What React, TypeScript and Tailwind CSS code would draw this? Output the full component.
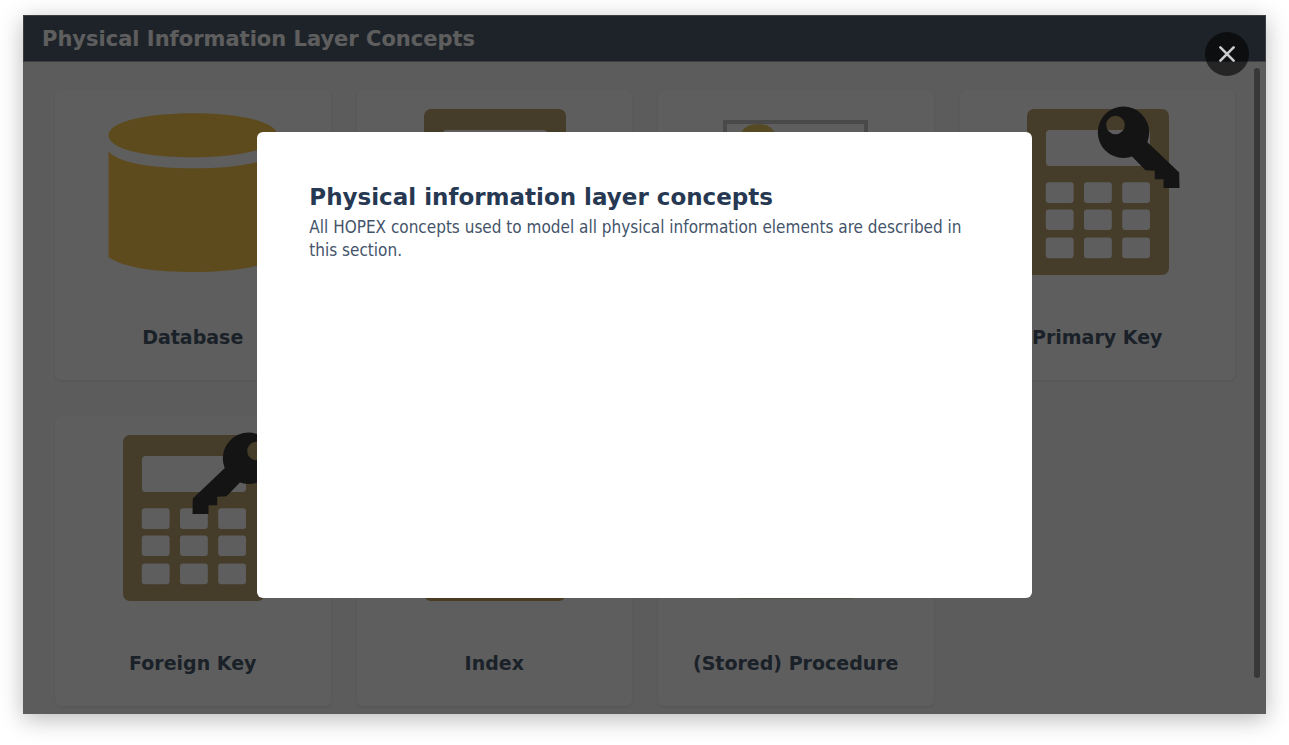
import type { ReactNode } from "react";

const KEY_SHAFT =
  "M141.5 37.3 L172.2 66.5 L172.5 82 L156.5 82 L156.5 73.3 L147.8 73.3 L147.8 64.7 L138.5 64.3 L125.8 51.3 L118 42 L133 30 Z";
const KEY_HEAD =
  "M116.5 0.6 a25.7 25.7 0 1 0 0 51.4 a25.7 25.7 0 1 0 0 -51.4 Z M108.5 9.7 a9.3 9.3 0 1 1 0 18.6 a9.3 9.3 0 1 1 0 -18.6 Z";

function Icon({ children }: { children: ReactNode }) {
  return (
    <svg viewBox="0 0 180 180" className="h-[180px] w-[180px] overflow-visible" aria-hidden="true">
      {children}
    </svg>
  );
}

function Calculator({ fill = "#baa271" }: { fill?: string }) {
  return (
    <>
      <rect x="20" y="3" width="142" height="166" rx="7" fill={fill} />
      <rect x="39" y="24" width="104" height="36" rx="3.5" fill="#fff" />
      {[76.3, 103.4, 131.6].map((y) =>
        [38.8, 77, 115.2].map((x) => (
          <rect key={`${x}-${y}`} x={x} y={y} width="27.8" height="20.6" rx="3" fill="#fff" />
        )),
      )}
    </>
  );
}

function Key({ mirrored = false }: { mirrored?: boolean }) {
  return (
    <g fill="#363636" transform={mirrored ? "translate(262 0) scale(-1 1)" : undefined}>
      <path d={KEY_HEAD} fillRule="evenodd" />
      <path d={KEY_SHAFT} />
    </g>
  );
}

const concepts: { name: string; icon: ReactNode }[] = [
  {
    name: "Database",
    icon: (
      <g fill="#fdca50">
        <path d="M5.5 29.3 C5.5 16 42 7.3 90 7.3 S174.5 16 174.5 29.3 S138 51.3 90 51.3 S5.5 43 5.5 29.3 Z" />
        <path d="M5.5 45 C14 57 50 62.3 90 62.3 S166 57 174.5 45 V151 C160 162 125 166 90 166 S20 162 5.5 151 Z" />
      </g>
    ),
  },
  { name: "Table", icon: <Calculator /> },
  {
    name: "View",
    icon: (
      <>
        <rect x="19" y="16" width="141" height="130" fill="none" stroke="#c6c6c6" strokeWidth="4" />
        <ellipse cx="52" cy="29" rx="17" ry="11" fill="#e6c860" />
      </>
    ),
  },
  {
    name: "Primary Key",
    icon: (
      <>
        <Calculator />
        <Key />
      </>
    ),
  },
  {
    name: "Foreign Key",
    icon: (
      <>
        <Calculator />
        <Key mirrored />
      </>
    ),
  },
  { name: "Index", icon: <Calculator fill="#c6a45c" /> },
  {
    name: "(Stored) Procedure",
    icon: <rect x="30" y="20" width="120" height="146.5" rx="4" fill="#c8bd86" />,
  },
];

export default function App() {
  return (
    <div className="bg-white px-[23px] pt-[15px] pb-[31px] font-['DejaVu_Sans',sans-serif]">
      <div className="relative bg-[#f8f8f8] pb-2 shadow-[0_5px_22px_rgba(0,0,0,0.28)]">
        <header className="flex h-[47px] items-center border border-[#a4a8ac] bg-[#536172] px-[18px]">
          <h1 className="text-[21px] leading-7 font-bold text-white">Physical Information Layer Concepts</h1>
        </header>

        <main className="grid grid-cols-4 gap-x-[26px] gap-y-9 pt-7 pr-[31px] pl-8">
          {concepts.map(({ name, icon }) => (
            <a
              key={name}
              href="#"
              className="flex h-[290px] flex-col items-center rounded-md bg-[#fefefe] pt-4 shadow-[0_1px_3px_rgba(0,0,0,0.08)]"
            >
              <Icon>{icon}</Icon>
              <span className="mt-[37px] text-[19px] leading-7 font-bold text-[#4b5a6e]">{name}</span>
            </a>
          ))}
        </main>

        <div className="absolute inset-0 flex items-center justify-center bg-black/63">
          <div className="absolute top-[53px] right-[6px] bottom-9 w-[6px] rounded-full bg-[#383838]" />
          <section
            role="dialog"
            aria-labelledby="dialog-title"
            className="min-h-[466px] w-[62.3%] rounded-md bg-white px-[52px] pt-12"
          >
            <h2 id="dialog-title" className="text-[23px] leading-[34px] font-bold text-[#263852]">
              Physical information layer concepts
            </h2>
            <p className="mt-0.5 font-['DejaVu_Sans_Condensed','DejaVu_Sans',sans-serif] text-[17px] leading-[23px] text-[#44546a]">
              All HOPEX concepts used to model all physical information elements are described in this section.
            </p>
          </section>
          <button
            type="button"
            aria-label="Close"
            className="absolute top-[17px] right-[17px] flex h-11 w-11 items-center justify-center rounded-full bg-black/60"
          >
            <svg viewBox="0 0 16 16" className="h-4 w-4" stroke="#ccc" strokeWidth="2.6" strokeLinecap="round">
              <path d="M1.4 1.4 L14.6 14.6 M14.6 1.4 L1.4 14.6" />
            </svg>
          </button>
        </div>
      </div>
    </div>
  );
}
